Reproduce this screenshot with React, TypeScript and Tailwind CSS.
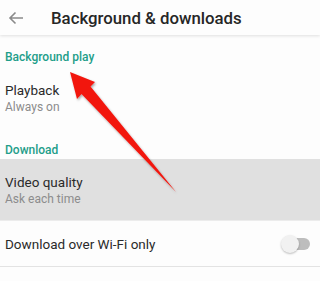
import { useState } from "react";

const font = { fontFamily: "Roboto, 'Noto Sans', sans-serif" };

const SectionLabel = ({ text, className }: { text: string; className?: string }) => (
  <div className={`px-[5px] text-[12px] leading-[16px] font-medium text-[#1f9e8a] ${className ?? ""}`}>
    {text}
  </div>
);

const App = () => {
  const [wifiOnly, setWifiOnly] = useState(false);

  return (
    <div className="relative w-[320px] h-[281px] overflow-hidden bg-[#fdfdfd]" style={font}>
      {/* App bar */}
      <div className="h-[35px] flex items-center bg-[#fdfdfd] shadow-[0_1px_3px_rgba(0,0,0,0.12)]">
        <button className="w-[30px] h-[35px] flex items-center justify-center pl-[2px]">
          <svg width="16" height="14" viewBox="0 0 16 14" fill="none">
            <path d="M15 7H2M7.5 1.5L2 7l5.5 5.5" stroke="#8a8a8a" strokeWidth="1.6" />
          </svg>
        </button>
        <h1 className="ml-[21px] text-[16.8px] leading-[22px] font-medium text-[#262626]">
          Background &amp; downloads
        </h1>
      </div>

      {/* Background play */}
      <SectionLabel text="Background play" className="pt-[14px]" />
      <div className="px-[5px] pt-[16px]">
        <div className="text-[13.5px] leading-[18px] text-[#2a2a2a]">Playback</div>
        <div className="text-[12px] leading-[17px] text-[#8c8c8c]">Always on</div>
      </div>

      {/* Download */}
      <SectionLabel text="Download" className="pt-[26px]" />
      <div className="mt-[1px] h-[61px] bg-[#e0e0e0] px-[5px] pt-[14px]">
        <div className="text-[13.5px] leading-[18px] text-[#2a2a2a]">Video quality</div>
        <div className="text-[12px] leading-[17px] text-[#8c8c8c]">Ask each time</div>
      </div>
      <div className="h-[1px] bg-[#ececec]" />
      <div className="h-[46px] flex items-center justify-between px-[5px] border-b border-[#e3e3e3]">
        <span className="text-[13.5px] leading-[18px] text-[#2a2a2a]">Download over Wi-Fi only</span>
        <button
          onClick={() => setWifiOnly(!wifiOnly)}
          className="relative w-[30px] h-[20px] mr-[4px] flex items-center"
        >
          <span className="absolute right-[1px] w-[22px] h-[12px] rounded-full bg-[#bdbdbd]" />
          <span className="absolute left-0 w-[18px] h-[18px] rounded-full bg-[#f1f1f1] shadow-[0_1px_2px_rgba(0,0,0,0.25)]" />
        </button>
      </div>

      {/* Red annotation arrow */}
      <svg className="absolute inset-0 pointer-events-none" width="320" height="281" viewBox="0 0 320 281">
        <defs>
          <filter id="sh" x="-20%" y="-20%" width="140%" height="140%">
            <feDropShadow dx="1" dy="1.5" stdDeviation="1.2" floodColor="#000" floodOpacity="0.35" />
          </filter>
        </defs>
        <polygon
          points="70,72 95,82 90.5,86.5 176,192 81.5,94 77,99"
          fill="#f2160f"
          filter="url(#sh)"
        />
      </svg>
    </div>
  );
};

export default App;
